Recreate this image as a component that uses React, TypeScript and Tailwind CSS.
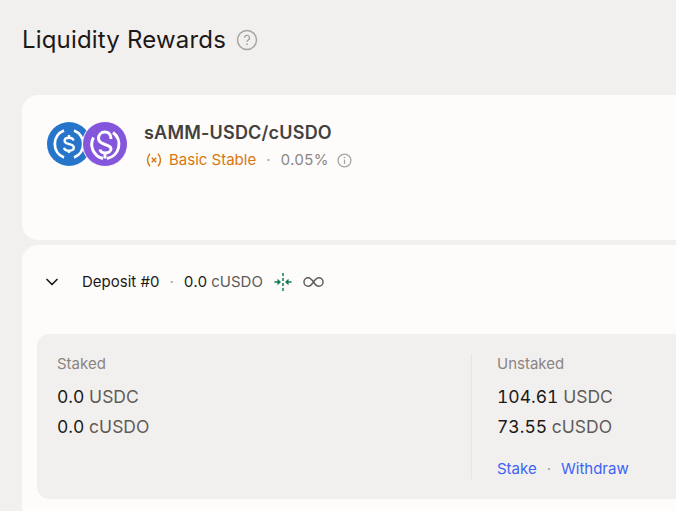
import { ChevronDown } from "lucide-react";

function UsdcLogo() {
  return (
    <svg width="44" height="44" viewBox="0 0 44 44" className="shrink-0">
      <circle cx="22" cy="22" r="22" fill="#2775ca" />
      <path d="M17 8.500a14.500 14.500 0 0 0 0 27M27 8.500a14.500 14.500 0 0 1 0 27" fill="none" stroke="#fff" strokeWidth="2.800" />
      <path d="M26.500 18.500c-.3-1.800-1.900-2.800-4.500-2.800-2.700 0-4.400 1.200-4.400 3.100 0 4.500 9.200 2.200 9.200 6.700 0 2-1.900 3.200-4.700 3.200-2.800 0-4.600-1.100-5-3M22 13v3M22 28v3" fill="none" stroke="#fff" strokeWidth="2.400" />
    </svg>
  );
}

function CusdoLogo() {
  return (
    <svg width="46" height="46" viewBox="0 0 46 46" className="relative -my-[1px] -ml-[9px] shrink-0">
      <circle cx="23" cy="23" r="22.500" fill="#8456db" stroke="#fdfcfb" strokeWidth="1" />
      <path d="M11.500 16.500A14.500 14.500 0 0 0 21 37.500" fill="none" stroke="#fff" strokeWidth="3" />
      <path d="M31 11.500A14.500 14.500 0 0 1 25 37.500" fill="none" stroke="#fff" strokeWidth="3" />
      <path d="M29 18C29 13.500 26.500 11 23 11C19 11 16.500 14 16.500 17.500C16.500 21 20 22.500 23 23.500C26.500 24.500 29 25.500 29 28C29 30.500 26 32 23 32C20.500 32 18.500 30.500 18 28.500M23 32v5.500" fill="none" stroke="#fff" strokeWidth="3" />
    </svg>
  );
}

function TokenRow({ value, unit }: { value: string; unit: string }) {
  return (
    <div className="text-[17.5px] leading-[30px] text-[#1c1917] tabular-nums">
      {value} <span className="text-[#5f5b58]">{unit}</span>
    </div>
  );
}

export default function App() {
  return (
    <div className="h-[511px] w-[676px] overflow-hidden bg-[#f2f0ef] pl-[22px] font-['Inter',sans-serif]">
      {/* Header */}
      <div className="flex h-[95px] items-start pt-[24px]">
        <h1 className="text-[24px] leading-[32px] font-normal tracking-[0.18px] text-[#1c1917]">Liquidity Rewards</h1>
        <svg width="22" height="22" viewBox="0 0 22 22" className="mt-[5px] ml-[10px]" fill="none">
          <circle cx="11" cy="11" r="9.500" stroke="#a8a39e" strokeWidth="1.500" />
          <path d="M8.500 8.800a2.500 2.500 0 1 1 3.600 2.300c-.8.400-1.100.9-1.100 1.600" stroke="#a8a39e" strokeWidth="1.400" />
          <circle cx="11" cy="15.200" r="0.900" fill="#a8a39e" />
        </svg>
      </div>

      {/* Pool card */}
      <div className="flex h-[145px] w-[720px] items-start rounded-[16px] bg-[#fdfcfb] pt-[27px] pl-[25px]">
        <UsdcLogo />
        <CusdoLogo />
        <div className="ml-[16px]">
          <div className="text-[18px] leading-[22px] font-semibold tracking-[0.2px] text-[#44403c]">sAMM-USDC/cUSDO</div>
          <div className="mt-[6px] flex items-center text-[15px] leading-[20px]">
            <svg width="18" height="18" viewBox="0 0 16 16" fill="none" stroke="#d9770f" strokeWidth="1.300" className="ml-[1px]">
              <path d="M4.500 2.500c-3 3-3 8 0 11M11.500 2.500c3 3 3 8 0 11" />
              <path d="M6 6l4 4M10 6l-4 4" />
            </svg>
            <span className="ml-[6px] text-[#d9770f]">Basic Stable</span>
            <span className="mx-[10px] text-[#a8a39e]">·</span>
            <span className="text-[#8a8582] tabular-nums">0.05%</span>
            <svg width="15" height="15" viewBox="0 0 14 14" fill="none" className="ml-[9px]">
              <circle cx="7" cy="7" r="6" stroke="#a8a39e" strokeWidth="1.200" />
              <path d="M7 6.200v4" stroke="#a8a39e" strokeWidth="1.200" />
              <circle cx="7" cy="4.200" r="0.800" fill="#a8a39e" />
            </svg>
          </div>
        </div>
      </div>

      {/* Deposit card */}
      <div className="mt-[5px] h-[300px] w-[720px] rounded-[16px] bg-[#fdfcfb] pt-[24px] pl-[15px]">
        <div className="flex h-[26px] items-center text-[15px] text-[#1c1917]">
          <ChevronDown size={20} strokeWidth={2} className="ml-[5px]" />
          <span className="ml-[20px]">Deposit #0</span>
          <span className="mx-[10px] text-[#a8a39e]">·</span>
          <span className="tabular-nums">0.0</span>
          <span className="ml-[4px] text-[#5f5b58]">cUSDO</span>
          <svg width="18" height="18" viewBox="0 0 18 18" fill="none" className="ml-[11px]">
            <path d="M9 0v18" stroke="#0e7a56" strokeWidth="1.500" strokeDasharray="3 2" />
            <path d="M0.500 9H4M13.500 9h4" stroke="#0e7a56" strokeWidth="1.500" />
            <path d="M3.500 5.800L7 9l-3.500 3.200zM14.500 5.800L11 9l3.500 3.200z" fill="#0e7a56" />
          </svg>
          <svg width="21" height="12" viewBox="0 0 22 12" fill="none" stroke="#5f5b58" strokeWidth="1.500" className="ml-[11px]">
            <path d="M11 6C9 3 7.500 1.500 5.500 1.500a4.500 4.500 0 0 0 0 9C7.500 10.500 9 9 11 6c2-3 3.500-4.500 5.500-4.500a4.500 4.500 0 0 1 0 9C14.500 10.500 13 9 11 6z" />
          </svg>
        </div>

        <div className="mt-[39px] flex h-[165px] rounded-[12px] bg-[#f2f0ef] pt-[20px] pl-[20px]">
          <div className="h-[125px] w-[415px] border-r border-[#e7e5e4]">
            <div className="text-[15px] leading-[20px] text-[#8a8582]">Staked</div>
            <div className="mt-[8px]">
              <TokenRow value="0.0" unit="USDC" />
              <TokenRow value="0.0" unit="cUSDO" />
            </div>
          </div>
          <div className="pl-[25px]">
            <div className="text-[15px] leading-[20px] text-[#8a8582]">Unstaked</div>
            <div className="mt-[8px]">
              <TokenRow value="104.61" unit="USDC" />
              <TokenRow value="73.55" unit="cUSDO" />
            </div>
            <div className="mt-[17px] flex text-[15px] leading-[20px] text-[#3b63f6]">
              <span>Stake</span>
              <span className="mx-[10px] text-[#a8a39e]">·</span>
              <span>Withdraw</span>
            </div>
          </div>
        </div>
      </div>
    </div>
  );
}
